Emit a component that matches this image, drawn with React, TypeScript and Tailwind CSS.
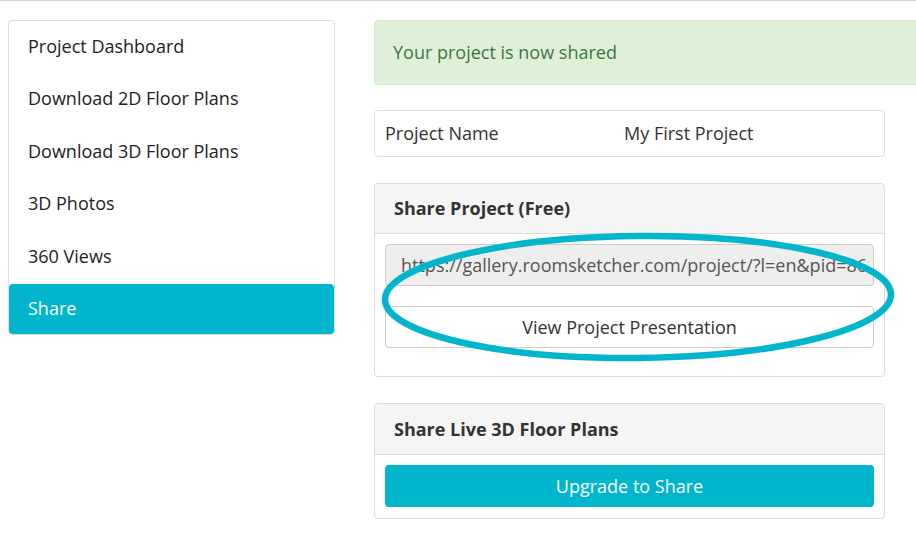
import React from "react";

const items = [
  "Project Dashboard",
  "Download 2D Floor Plans",
  "Download 3D Floor Plans",
  "3D Photos",
  "360 Views",
  "Share",
];

export default function App() {
  return (
    <div
      className="relative w-[916px] h-[536px] overflow-hidden bg-white border-t border-[#d2d2d2] text-[18px] text-[#333]"
      style={{ fontFamily: '"Open Sans", "Liberation Sans", sans-serif' }}
    >
      <div className="flex items-start">
        {/* Sidebar */}
        <div className="shrink-0 ml-[8px] mt-[19px] w-[327px] border border-[#dddddd] rounded-[4px] flex flex-col gap-[2.5px]">
          {items.map((it) => {
            const active = it === "Share";
            return (
              <div
                key={it}
                className={
                  active
                    ? "h-[50px] flex items-center pl-[19px] bg-[#00b5cc] text-white rounded-[4px]"
                    : "h-[50px] flex items-center pl-[19px] text-[#222]"
                }
              >
                {it}
              </div>
            );
          })}
        </div>

        {/* Main */}
        <div className="shrink-0 ml-[39px] mt-[19px] flex flex-col">
          <div className="w-[570px] h-[65px] flex items-center pl-[18px] bg-[#dff0d8] border border-[#d6e9c6] rounded-[4px] text-[#3c763d]">
            Your project is now shared
          </div>

          <div className="mt-[25px] w-[511px] h-[47px] flex items-center border border-[#dddddd] rounded-[4px]">
            <div className="w-[249px] pl-[10px]">Project Name</div>
            <div>My First Project</div>
          </div>

          <div className="mt-[26px] w-[511px] border border-[#dddddd] rounded-[4px]">
            <div className="h-[50px] flex items-center pl-[19px] bg-[#f5f5f5] border-b border-[#dddddd] rounded-t-[4px] font-bold">
              Share Project (Free)
            </div>
            <div className="px-[10px] pt-[10px] pb-[28px]">
              <div className="h-[42px] flex items-center pl-[15px] pr-[4px] bg-[#eeeeee] border border-[#cccccc] rounded-[4px] text-[#555] overflow-hidden whitespace-nowrap">
                <span className="overflow-hidden">https://gallery.roomsketcher.com/project/?l=en&amp;pid=8612345678</span>
              </div>
              <div className="mt-[20px] h-[42px] flex items-center justify-center bg-white border border-[#cccccc] rounded-[4px] text-[#333]">
                View Project Presentation
              </div>
            </div>
          </div>

          <div className="mt-[26px] w-[511px] border border-[#dddddd] rounded-[4px]">
            <div className="h-[51px] flex items-center pl-[19px] bg-[#f5f5f5] border-b border-[#dddddd] rounded-t-[4px] font-bold">
              Share Live 3D Floor Plans
            </div>
            <div className="px-[10px] pt-[10px] pb-[11px]">
              <div className="h-[42px] flex items-center justify-center bg-[#00b5cc] rounded-[4px] text-white">
                Upgrade to Share
              </div>
            </div>
          </div>
        </div>
      </div>

      {/* Hand-drawn highlight ellipse */}
      <svg
        className="absolute left-0 top-0 pointer-events-none"
        width="916"
        height="536"
        viewBox="0 0 916 536"
      >
        <ellipse
          cx="638"
          cy="296"
          rx="253"
          ry="61"
          fill="none"
          stroke="#00b5cc"
          strokeWidth="6.5"
          transform="rotate(-0.6 638 296)"
        />
      </svg>
    </div>
  );
}
